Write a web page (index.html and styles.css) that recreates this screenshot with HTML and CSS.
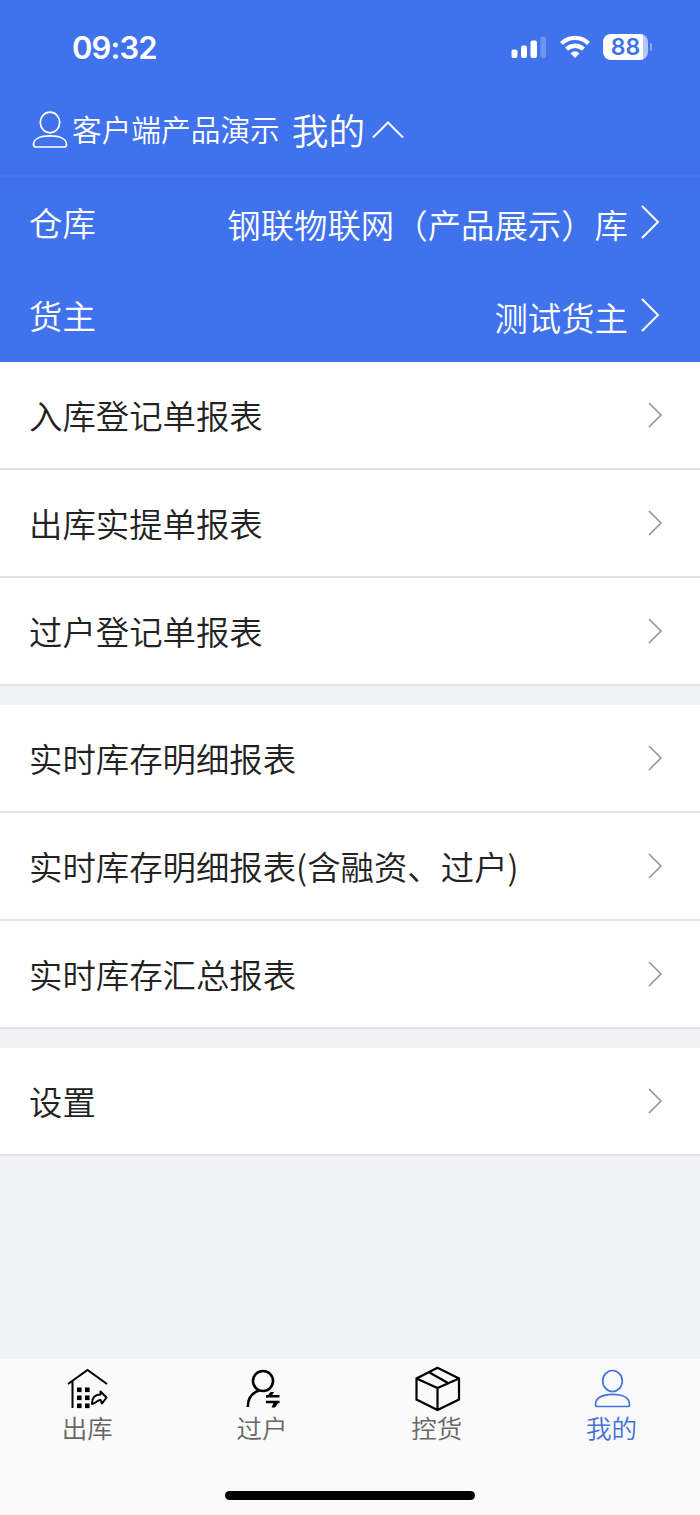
FILE: index.html
```html
<!DOCTYPE html>
<html lang="zh-CN">
<head>
    <meta charset="utf-8">
    <meta name="viewport" content="width=device-width, initial-scale=1">
    <title>我的</title>
    <link rel="stylesheet" href="styles.css">
</head>
<body>
    <header class="header">
        <div class="status-bar">
            <span class="time">09:32</span>
            <div class="status-icons">
                <svg class="signal" width="36" height="24" viewBox="0 0 36 24" fill="#fff">
                    <rect x="0.500" y="14.500" width="6" height="8.500" rx="2"/>
                    <rect x="10" y="10.500" width="6" height="12.500" rx="2"/>
                    <rect x="19.500" y="5.500" width="6.500" height="17.500" rx="2"/>
                    <rect x="29.500" y="1.500" width="5.500" height="21.500" rx="2" opacity="0.25"/>
                </svg>
                <svg class="wifi" width="30" height="24" viewBox="0 0 30 24" fill="none" stroke="#fff" stroke-width="4.300">
                    <path d="M1.500 8.500 C9 1 21 1 28.500 8.500"/>
                    <path d="M6.500 14.200 C11.500 9.600 18.500 9.600 23.500 14.200"/>
                    <path d="M10.500 18.200 Q15 14.500 19.500 18.200 L15 23 Z" fill="#fff" stroke="none"/>
                </svg>
                <div class="battery">88</div>
                <span class="battery-tip"></span>
            </div>
        </div>

        <div class="account">
            <svg class="account-icon" width="36" height="38" viewBox="0 0 36 38" fill="none" stroke="#fff" stroke-width="1.700">
                <ellipse cx="18" cy="11.500" rx="9.700" ry="10.300"/>
                <path d="M1.500 33.500 C1.500 28 8 24.900 18 24.900 C28 24.900 34.500 28 34.500 33.500 Q34.500 36 32 36 H4 Q1.500 36 1.500 33.500 Z"/>
            </svg>
            <span class="account-name">客户端产品演示</span>
            <span class="account-page">我的</span>
            <svg class="account-arrow" width="32" height="18" viewBox="0 0 32 18" fill="none" stroke="#fff" stroke-width="2">
                <path d="M1 16.500 L16 1.500 L31 16.500"/>
            </svg>
        </div>

        <div class="picker">
            <span class="picker-label">仓库</span>
            <span class="picker-value">钢联物联网（产品展示）库</span>
            <svg class="picker-arrow" width="20" height="34" viewBox="0 0 20 34" fill="none" stroke="#fff" stroke-width="2"><path d="M2 1 L18 17 L2 33"/></svg>
        </div>
        <div class="picker">
            <span class="picker-label">货主</span>
            <span class="picker-value">测试货主</span>
            <svg class="picker-arrow" width="20" height="34" viewBox="0 0 20 34" fill="none" stroke="#fff" stroke-width="2"><path d="M2 1 L18 17 L2 33"/></svg>
        </div>
    </header>

    <main class="content">
        <div class="cell-group">
            <div class="cell"><span>入库登记单报表</span><svg class="cell-arrow" viewBox="0 0 15 26"><path d="M1 1 L13 13 L1 25"/></svg></div>
            <div class="cell"><span>出库实提单报表</span><svg class="cell-arrow" viewBox="0 0 15 26"><path d="M1 1 L13 13 L1 25"/></svg></div>
            <div class="cell"><span>过户登记单报表</span><svg class="cell-arrow" viewBox="0 0 15 26"><path d="M1 1 L13 13 L1 25"/></svg></div>
        </div>
        <div class="cell-group">
            <div class="cell"><span>实时库存明细报表</span><svg class="cell-arrow" viewBox="0 0 15 26"><path d="M1 1 L13 13 L1 25"/></svg></div>
            <div class="cell"><span>实时库存明细报表(含融资、过户)</span><svg class="cell-arrow" viewBox="0 0 15 26"><path d="M1 1 L13 13 L1 25"/></svg></div>
            <div class="cell"><span>实时库存汇总报表</span><svg class="cell-arrow" viewBox="0 0 15 26"><path d="M1 1 L13 13 L1 25"/></svg></div>
        </div>
        <div class="cell-group">
            <div class="cell"><span>设置</span><svg class="cell-arrow" viewBox="0 0 15 26"><path d="M1 1 L13 13 L1 25"/></svg></div>
        </div>
    </main>

    <footer class="footer">
        <nav class="tabs">
            <div class="tab">
                <svg width="50" height="46" viewBox="0 0 50 46" fill="none" stroke="#000" stroke-width="2">
                    <path d="M6 18 L25.500 4 L45 18 M10.500 15 V42"/>
                    <g fill="#000" stroke="none">
                        <rect x="15" y="21.500" width="4.600" height="4.600"/><rect x="23" y="21.500" width="4.600" height="4.600"/>
                        <rect x="15" y="29.500" width="4.600" height="4.600"/><rect x="23" y="29.500" width="4.600" height="4.600"/>
                        <rect x="15" y="37.500" width="4.600" height="4.600"/><rect x="23" y="37.500" width="4.600" height="4.600"/>
                    </g>
                    <path d="M30 37.500 C30 31.500 33 28.500 38.500 28.500 V25.500 L44.500 31.500 L40 37.500 L38.500 34 C35.500 33.500 34 37.500 30 38 Z" stroke-linejoin="round"/>
                </svg>
                <span>出库</span>
            </div>
            <div class="tab">
                <svg width="50" height="46" viewBox="0 0 50 46" fill="none" stroke="#000" stroke-width="2.600">
                    <circle cx="26" cy="15" r="10"/>
                    <path d="M22 24.500 C15 27 10.800 33 10.800 41"/>
                    <path d="M42.500 30.300 H29 M29 36 H42.500" stroke-width="2.400"/>
                    <path d="M29 31.500 L33.500 26 H37 L34.500 30.300 Z M42.500 35 L38 41.500 H34.500 L37 36 Z" fill="#000" stroke="none"/>
                </svg>
                <span>过户</span>
            </div>
            <div class="tab">
                <svg width="50" height="46" viewBox="0 0 50 46" fill="none" stroke="#000" stroke-width="2.200">
                    <path d="M25.500 1.800 L47 12.500 V33.500 L25.500 44 L4.500 33.500 V12.500 Z M4.500 12.500 L25.500 22 L47 12.500 M25.500 22 V44 M17 6.300 L36 17"/>
                </svg>
                <span>控货</span>
            </div>
            <div class="tab tab-active">
                <svg width="50" height="46" viewBox="0 0 50 46" fill="none" stroke="#4472dd" stroke-width="1.700">
                    <ellipse cx="25.500" cy="15" rx="9.800" ry="10.500"/>
                    <path d="M8.500 38.500 C8.500 32 15 28.300 25.500 28.300 C36 28.300 42.500 32 42.500 38.500 Q42.500 40.500 40.500 40.500 H10.500 Q8.500 40.500 8.500 38.500 Z"/>
                </svg>
                <span>我的</span>
            </div>
        </nav>
        <div class="home-indicator"></div>
    </footer>
</body>
</html>
```
FILE: styles.css
```css
* {
    box-sizing: border-box;
}

body {
    margin: 0;
    height: 1515px;
    display: flex;
    flex-direction: column;
    background-color: #f0f2f5;
    color: #222;
    font-family: "Noto Sans CJK SC", sans-serif;
    font-weight: 350;
    white-space: nowrap;
}

.header {
    height: 362px;
    background-color: #4072ed;
    color: #fff;
}

.status-bar {
    height: 82px;
    padding: 12px 48px 0 72px;
    display: flex;
    align-items: center;
    justify-content: space-between;
}

.time {
    font-family: Inter, sans-serif;
    font-size: 31px;
    font-weight: 600;
    letter-spacing: -0.900px;
}

.status-icons {
    display: flex;
    align-items: center;
}

.wifi {
    margin-left: 13px;
}

.battery {
    width: 45px;
    height: 26px;
    margin-left: 13px;
    border-radius: 8px;
    background: linear-gradient(to right, #fff 40px, #b3c7f8 40px);
    color: #4072ed;
    font: 600 23px/27px Inter, sans-serif;
    text-align: center;
}

.battery-tip {
    width: 2px;
    height: 8px;
    margin-left: 2px;
    border-radius: 0 3px 3px 0;
    background-color: #8eabf5;
}

.account {
    height: 95px;
    padding: 2px 32px 0;
    display: flex;
    align-items: center;
    border-bottom: 2px solid #4878f0;
}

.account-name {
    margin-left: 4px;
    padding-bottom: 2px;
    font-size: 29.700px;
}

.account-page {
    margin-left: 12px;
    padding-bottom: 2px;
    font-size: 36.700px;
}

.account-arrow {
    margin-left: 7px;
}

.picker {
    height: 93px;
    padding: 0 40px 4px 29px;
    display: flex;
    align-items: center;
    font-size: 33.400px;
}

.picker-label {
    margin-right: auto;
}

.picker-value {
    padding-top: 4px;
}

.picker-arrow {
    margin-left: 12px;
}

.content {
    display: flex;
    flex-direction: column;
    gap: 19px;
}

.cell {
    height: 108px;
    padding: 0 37px 0 29px;
    display: flex;
    align-items: center;
    justify-content: space-between;
    background-color: #fff;
    border-bottom: 2px solid #e2e3e4;
    font-size: 33.400px;
}

.cell span {
    padding-bottom: 2px;
}

.cell-arrow {
    width: 15px;
    height: 26px;
    fill: none;
    stroke: #999;
    stroke-width: 1.700;
}

.footer {
    height: 156px;
    margin-top: auto;
    background-color: #fafafa;
}

.tabs {
    display: grid;
    grid-template-columns: repeat(4, 1fr);
    height: 132px;
    padding: 7px 1px 0 0;
}

.tab {
    display: flex;
    flex-direction: column;
    align-items: center;
    color: #666;
    font-size: 25.500px;
    line-height: 30px;
}

.tab-active {
    color: #4472dd;
}

.home-indicator {
    width: 250px;
    height: 9px;
    margin: 0 auto;
    border-radius: 5px;
    background-color: #000;
}
```
